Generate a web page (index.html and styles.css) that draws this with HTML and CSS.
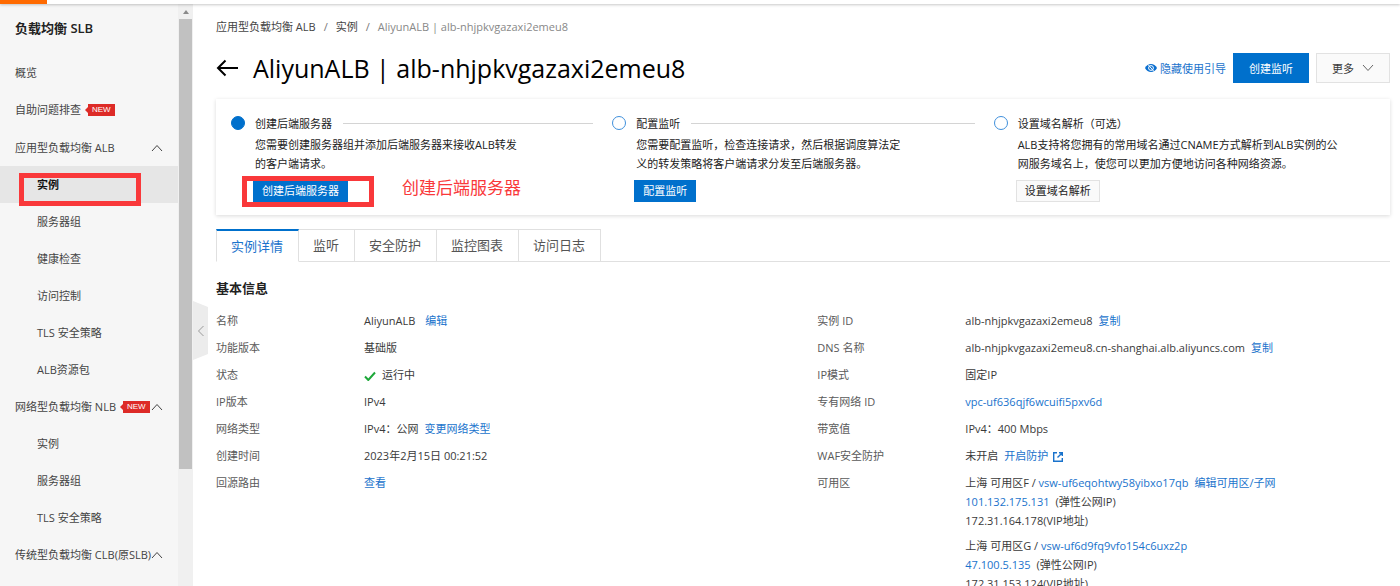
FILE: index.html
```html
<!DOCTYPE html>
<html lang="zh-CN">
<head>
<meta charset="utf-8">
<title>AliyunALB - 负载均衡 SLB</title>
<link rel="stylesheet" href="styles.css">
</head>
<body>
<div class="topbar"><div class="topbar-brand"></div></div>
<div class="shell">
  <aside class="sidebar">
    <nav class="menu" aria-label="负载均衡 SLB">
      <h2 class="menu-title">负载均衡 SLB</h2>
      <a class="menu-item" href="#">概览</a>
      <a class="menu-item" href="#">自助问题排查<span class="badge-new">NEW</span></a>
      <div class="menu-group">
        <button class="menu-item menu-toggle" type="button" aria-expanded="true">应用型负载均衡 ALB<svg class="chevron" viewBox="0 0 12 8"><path d="M1 7l5-5.500L11 7"/></svg></button>
        <a class="menu-item sub active" href="#" aria-current="page">实例<span class="mark mark-menu"></span></a>
        <a class="menu-item sub" href="#">服务器组</a>
        <a class="menu-item sub" href="#">健康检查</a>
        <a class="menu-item sub" href="#">访问控制</a>
        <a class="menu-item sub" href="#">TLS 安全策略</a>
        <a class="menu-item sub" href="#">ALB资源包</a>
      </div>
      <div class="menu-group">
        <button class="menu-item menu-toggle" type="button" aria-expanded="true">网络型负载均衡 NLB<span class="badge-new">NEW</span><svg class="chevron" viewBox="0 0 12 8"><path d="M1 7l5-5.500L11 7"/></svg></button>
        <a class="menu-item sub" href="#">实例</a>
        <a class="menu-item sub" href="#">服务器组</a>
        <a class="menu-item sub" href="#">TLS 安全策略</a>
      </div>
      <div class="menu-group">
        <button class="menu-item menu-toggle" type="button" aria-expanded="true">传统型负载均衡 CLB(原SLB)<svg class="chevron" viewBox="0 0 12 8"><path d="M1 7l5-5.500L11 7"/></svg></button>
      </div>
    </nav>
    <div class="scrollbar" aria-hidden="true">
      <svg class="scroll-arrow" viewBox="0 0 6 4"><path d="M0 4l3-4 3 4z"/></svg>
      <div class="scroll-thumb"></div>
    </div>
  </aside>

  <main class="main">
    <button class="collapse" type="button" aria-label="收起导航"><svg viewBox="0 0 8 12"><path d="M6.500 1L1.500 6l5 5"/></svg></button>

    <nav class="crumbs" aria-label="面包屑">
      <a href="#">应用型负载均衡 ALB</a><span class="sep">/</span><a href="#">实例</a><span class="sep">/</span><span class="current">AliyunALB | alb-nhjpkvgazaxi2emeu8</span>
    </nav>

    <header class="page-head">
      <a class="back" href="#" aria-label="返回"><svg viewBox="0 0 22 18"><path d="M22 9H2M9.500 1.500L2 9l7.500 7.500"/></svg></a>
      <h1>AliyunALB | alb-nhjpkvgazaxi2emeu8</h1>
      <a class="guide" href="#"><svg viewBox="0 0 12 10"><path class="eye" d="M0 5C1.300 2.300 3.500 1 6 1s4.700 1.300 6 4C10.700 7.700 8.500 9 6 9S1.300 7.700 0 5z"/><circle class="iris" cx="6" cy="5" r="2.400"/><path class="slash" d="M3 1.500l6 7"/></svg>隐藏使用引导</a>
      <button class="btn btn-primary" type="button">创建监听</button>
      <button class="btn" type="button">更多<svg class="chevron-down" viewBox="0 0 12 8"><path d="M1 1l5 5.500L11 1"/></svg></button>
    </header>

    <section class="steps" aria-label="使用引导">
      <div class="step">
        <span class="dot dot-on"></span>
        <div class="step-body">
          <div class="step-title line">创建后端服务器</div>
          <p>您需要创建服务器组并添加后端服务器来接收ALB转发<br>的客户端请求。</p>
          <div class="step-action">
            <button class="btn-small btn-primary" type="button">创建后端服务器</button>
            <span class="mark mark-step"></span>
            <span class="note">创建后端服务器</span>
          </div>
        </div>
      </div>
      <div class="step">
        <span class="dot"></span>
        <div class="step-body">
          <div class="step-title line">配置监听</div>
          <p>您需要配置监听，检查连接请求，然后根据调度算法定<br>义的转发策略将客户端请求分发至后端服务器。</p>
          <div class="step-action"><button class="btn-small btn-primary" type="button">配置监听</button></div>
        </div>
      </div>
      <div class="step">
        <span class="dot"></span>
        <div class="step-body">
          <div class="step-title">设置域名解析（可选）</div>
          <p>ALB支持将您拥有的常用域名通过CNAME方式解析到ALB实例的公<br>网服务域名上，使您可以更加方便地访问各种网络资源。</p>
          <div class="step-action"><button class="btn-small" type="button">设置域名解析</button></div>
        </div>
      </div>
    </section>

    <div class="tabs" role="tablist">
      <button class="tab selected" role="tab" type="button" aria-selected="true">实例详情</button>
      <button class="tab" role="tab" type="button">监听</button>
      <button class="tab" role="tab" type="button">安全防护</button>
      <button class="tab" role="tab" type="button">监控图表</button>
      <button class="tab" role="tab" type="button">访问日志</button>
    </div>

    <section class="info">
      <h3>基本信息</h3>
      <div class="info-cols">
        <dl>
          <dt>名称</dt><dd>AliyunALB<a class="far" href="#">编辑</a></dd>
          <dt>功能版本</dt><dd>基础版</dd>
          <dt>状态</dt><dd><svg class="check" viewBox="0 0 12 10"><path d="M1 5.500L4.300 9 11 1.500"/></svg>运行中</dd>
          <dt>IP版本</dt><dd>IPv4</dd>
          <dt>网络类型</dt><dd>IPv4：公网<a class="near" href="#">变更网络类型</a></dd>
          <dt>创建时间</dt><dd>2023年2月15日 00:21:52</dd>
          <dt>回源路由</dt><dd><a href="#">查看</a></dd>
        </dl>
        <dl>
          <dt>实例 ID</dt><dd>alb-nhjpkvgazaxi2emeu8<a class="near" href="#">复制</a></dd>
          <dt>DNS 名称</dt><dd>alb-nhjpkvgazaxi2emeu8.cn-shanghai.alb.aliyuncs.com<a class="near" href="#">复制</a></dd>
          <dt>IP模式</dt><dd>固定IP</dd>
          <dt>专有网络 ID</dt><dd><a href="#">vpc-uf636qjf6wcuifi5pxv6d</a></dd>
          <dt>带宽值</dt><dd>IPv4：400 Mbps</dd>
          <dt>WAF安全防护</dt><dd>未开启<a class="near" href="#">开启防护<svg class="external" viewBox="0 0 12 12"><path d="M5 1.700H1.700v8.600h8.600V7M7 1.700h3.300V5M10.300 1.700L5.500 6.500"/></svg></a></dd>
          <dt>可用区</dt>
          <dd>
            <div class="zone">
              <div>上海 可用区F / <a href="#">vsw-uf6eqohtwy58yibxo17qb</a><a class="near" href="#">编辑可用区/子网</a></div>
              <div><a href="#">101.132.175.131</a><span class="near">(弹性公网IP)</span></div>
              <div>172.31.164.178(VIP地址)</div>
            </div>
            <div class="zone">
              <div>上海 可用区G / <a href="#">vsw-uf6d9fq9vfo154c6uxz2p</a></div>
              <div><a href="#">47.100.5.135</a><span class="near">(弹性公网IP)</span></div>
              <div>172.31.153.124(VIP地址)</div>
            </div>
          </dd>
        </dl>
      </div>
    </section>
  </main>
</div>
</body>
</html>
```
FILE: styles.css
```css
* { box-sizing: border-box; }

body {
  margin: 0;
  height: 100vh;
  display: flex;
  flex-direction: column;
  overflow: hidden;
  background: #fff;
  color: #3a3a3a;
  font: 11px/19px "Open Sans", "Noto Sans CJK SC", sans-serif;
}

h1, h2, h3, p, dl, dd { margin: 0; }
a { color: #1a73cc; text-decoration: none; }
button { font: inherit; color: inherit; margin: 0; cursor: pointer; white-space: nowrap; }
svg { fill: none; stroke: currentColor; flex: none; }

.topbar {
  flex: none;
  height: 4px;
  background: #fff;
  box-shadow: 0 1px 3px rgba(0, 0, 0, .22);
  position: relative;
  z-index: 2;
}
.topbar-brand { width: 47px; height: 4px; background: #ff6a00; }

.shell { flex: 1; display: flex; min-height: 0; }

/* Sidebar */
.sidebar { flex: none; display: flex; width: 193px; background: #f6f6f6; }
.menu { flex: 1; overflow: hidden; }
.menu-title { padding: 15px 15px 0; height: 50px; font-size: 13px; font-weight: 600; line-height: 19px; color: #222; }
.menu-item {
  display: flex;
  align-items: center;
  width: 100%;
  height: 37px;
  padding: 0 15px;
  border: 0;
  background: none;
  color: #444;
  white-space: nowrap;
  text-align: left;
}
.menu-group { margin-top: 1px; }
.menu-group + .menu-group { margin-top: 0; }
.menu-item.sub { padding-left: 37px; }
.menu-item.active { position: relative; background: #e6e6e6; color: #111; font-weight: 700; }
.menu-toggle .chevron { width: 12px; height: 8px; margin-left: auto; stroke: #444; }
.badge-new {
  position: relative;
  margin-left: 7px;
  padding: 0 4px;
  background: #dd2b27;
  color: #fff;
  font: 8px/12px "Liberation Sans", sans-serif;
}
.badge-new::before {
  content: "";
  position: absolute;
  left: -3px;
  top: 3px;
  border: 3px solid transparent;
  border-left: 0;
  border-right-color: #dd2b27;
}
.scrollbar {
  flex: none;
  width: 15px;
  background: #f0f0f0;
  display: flex;
  flex-direction: column;
  align-items: center;
}
.scroll-arrow { width: 6px; height: 4px; margin: 6px 0 5px; fill: #8a8a8a; stroke: none; }
.scroll-thumb { width: 13px; height: 450px; background: #c1c1c1; }

/* Main column */
.main { flex: 1; min-width: 0; position: relative; padding: 13px 10px 0 23px; }
.collapse {
  position: absolute;
  left: 0;
  top: 297px;
  width: 15px;
  height: 59px;
  padding: 0 4px;
  border: 0;
  background: #ececec;
  clip-path: polygon(0 0, 100% 10%, 100% 90%, 0 100%);
  color: #999;
}
.collapse svg { display: block; width: 8px; height: 12px; }

.crumbs { display: flex; }
.crumbs a { color: #444; }
.crumbs .sep { margin: 0 8px; color: #777; }
.crumbs .current { color: #888; }

.page-head { display: flex; align-items: center; height: 30px; margin-top: 17px; }
.back { display: flex; color: #000; margin-right: 15px; }
.back svg { width: 22px; height: 18px; stroke-width: 2; }
.page-head h1 { font-size: 25px; font-weight: 500; line-height: 30px; color: #000; white-space: nowrap; }
.guide { display: flex; align-items: center; gap: 3px; margin-left: auto; margin-right: 7px; white-space: nowrap; }
.guide svg { width: 12px; height: 10px; }
.guide .eye { fill: #0a6fd0; stroke: none; }
.guide .iris, .guide .slash { stroke: #fff; }
.btn {
  display: flex;
  align-items: center;
  gap: 8px;
  height: 30px;
  padding: 0 15px;
  border: 1px solid #e2e2e2;
  background: #fafafa;
}
.btn + .btn { margin-left: 7px; }
.btn-primary.btn-primary { border-color: #0070cc; background: #0070cc; color: #fff; }
.chevron-down { width: 12px; height: 8px; stroke: #666; }

/* Guide steps */
.steps {
  display: grid;
  grid-template-columns: repeat(3, 1fr);
  margin-top: 16px;
  padding: 15px 15px 13px;
  box-shadow: 0 1px 4px rgba(0, 0, 0, .15);
  color: #222;
}
.step { display: flex; gap: 10px; min-width: 0; }
.dot { flex: none; width: 14px; height: 14px; margin-top: 2px; border: 1px solid #3f90dc; border-radius: 50%; }
.dot-on { border-color: #0070cc; background: #0070cc; }
.step-body { flex: 1; min-width: 0; white-space: nowrap; }
.step-title { display: flex; align-items: center; margin-bottom: 2px; }
.step-title.line::after { content: ""; flex: 1; height: 1px; margin: 0 19px 0 11px; background: #d4d4d4; }
.step-action { position: relative; margin: 7px 0 0 -2px; }
.btn-small { display: block; height: 22px; padding: 0 8px; border: 1px solid #e2e2e2; background: #fafafa; line-height: 20px; }
.mark { position: absolute; border: 5px solid #f9383a; pointer-events: none; }
.mark-step { left: -11px; top: -4px; width: 132px; height: 31px; }
.mark-menu { left: 19px; top: 7px; width: 122px; height: 33px; z-index: 1; }
.note { position: absolute; left: 149px; top: -4px; font-size: 17px; line-height: 24px; color: #f9383a; }

/* Tabs */
.tabs { display: flex; margin-top: 14px; border-bottom: 1px solid #e0e0e0; }
.tab {
  height: 33px;
  padding: 0 15px 0 14px;
  margin-bottom: -1px;
  border: 1px solid #e0e0e0;
  border-left: 0;
  background: #fff;
  font-size: 13px;
  color: #555;
}
.tab.selected { border-top: 2px solid #0070cc; border-left: 1px solid #e0e0e0; border-bottom-color: #fff; color: #1a73cc; }

/* Details */
.info h3 { margin: 17px 0 13px; font-size: 13px; font-weight: 700; line-height: 19px; color: #222; }
.info-cols { display: grid; grid-template-columns: 21fr 20fr; }
.info dl { display: grid; grid-template-columns: 148px 1fr; row-gap: 8px; align-content: start; white-space: nowrap; }
.info dt { color: #5a5a5a; }
.near { margin-left: 6px; }
.far { margin-left: 10px; }
.check { width: 12px; height: 10px; margin-right: 6px; vertical-align: middle; stroke: #1ea83a; stroke-width: 2; }
.external { width: 12px; height: 12px; margin-left: 4px; vertical-align: middle; stroke-width: 1.4; }
.zone + .zone { margin-top: 6px; }
```
